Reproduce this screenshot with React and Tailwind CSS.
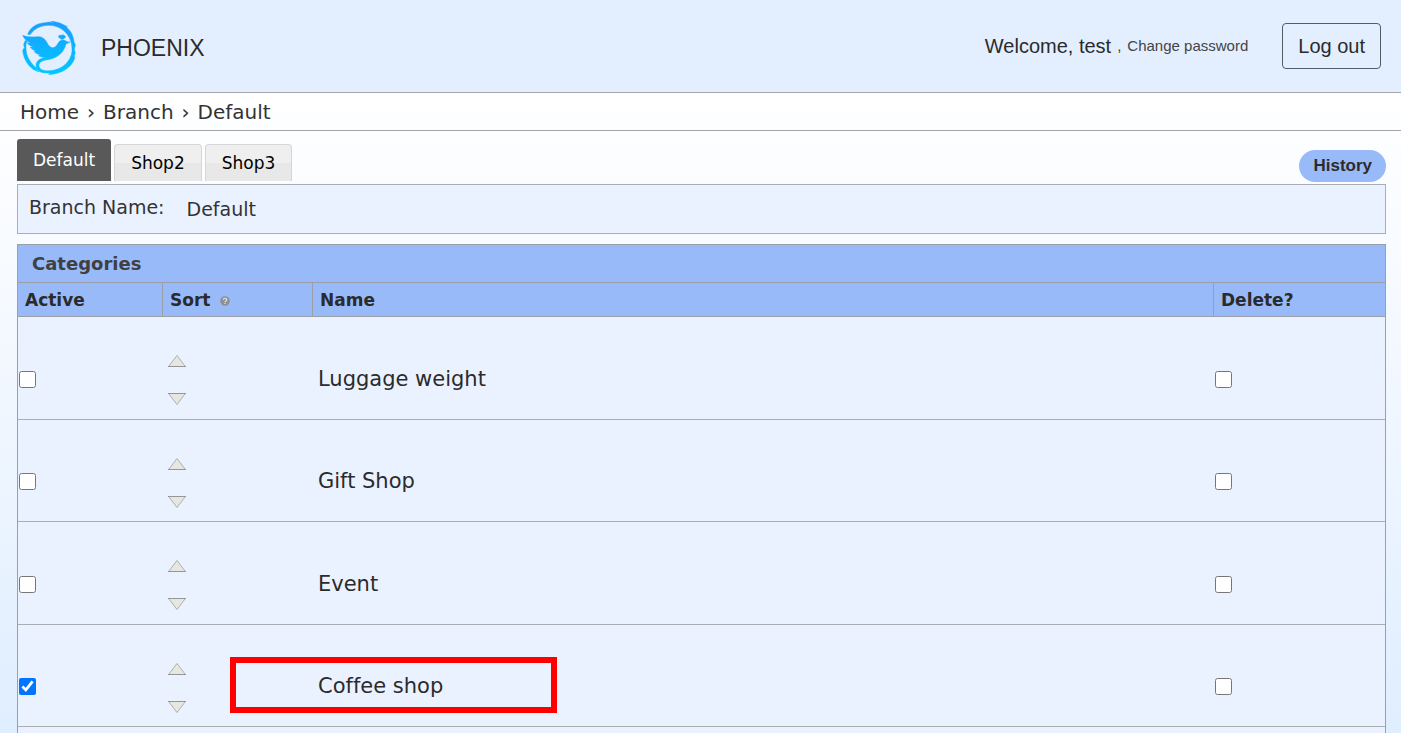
import React from "react";

const categories = [
  { name: "Luggage weight", active: false },
  { name: "Gift Shop", active: false },
  { name: "Event", active: false },
  { name: "Coffee shop", active: true, highlighted: true },
  { name: "", active: false },
];

function PhoenixLogo() {
  return (
    <svg viewBox="37 28 162 162" className="mt-1 size-[54px] shrink-0" role="img" aria-label="Phoenix">
      <defs>
        <linearGradient id="flame" x1="0" y1="28" x2="0" y2="190" gradientUnits="userSpaceOnUse">
          <stop offset="0" stopColor="#1a9dff" />
          <stop offset="1" stopColor="#00c8ff" />
        </linearGradient>
      </defs>
      <g fill="url(#flame)" stroke="url(#flame)" strokeWidth="1.5" strokeLinejoin="round">
        <path d="M54 68 C60 50 78 36 100 34 L120 31 L134 33 L124 28 L142 32 C151 34 158 37 163 40 L173 45 L170 46 C184 58 191 72 193 90 L197 100 L194 112 L197 126 L194 130 L195 140 C189 158 174 172 156 180 L138 186 L117 189 L122 185 L100 183 C84 181 77 168 80 155 C84 144 94 139 108 139 L96 136 L86 132 L92 130 C84 128 76 124 73 119 L82 119 C72 116 64 111 62 106 L72 106 C60 102 54 97 53 93 L64 95 C53 90 43 82 39 71 C53 77 69 76 83 75 C96 74 105 80 111 91 C116 101 122 109 131 108 C140 106 143 98 147 92 C151 86 158 84 165 86 L172 90 L181 91 L169 97 C165 110 160 122 148 130 C137 139 124 143 110 145 C96 147 87 153 88 163 C90 176 106 178 121 177 C156 176 184 150 187 119 C190 76 160 43 121 41 C97 40 76 49 61 69 Z" />
        <path d="M47 86 L42 98 L44 108 L39 116 C40 132 47 149 58 162 L72 174 L88 181 L78 171 L87 174 C68 160 54 143 50 121 C48 108 48 98 52 89 Z" />
        <path d="M147 76 C145 71 151 69 154 72 C157 68 163 69 163 72 C168 71 169 77 165 79 C162 83 158 81 157 84 C155 80 149 82 147 76 Z" />
      </g>
    </svg>
  );
}

function SortArrow({ down }) {
  return (
    <button type="button" aria-label={down ? "Move down" : "Move up"} className="block">
      <svg viewBox="0 0 18 13" className="h-[13px] w-[18px]">
        <path d={down ? "M.5 .5h17l-8.5 11z" : "M.5 12.5h17L9 1.5z"} fill="#e6e7e1" />
        <path d={down ? "M1 1 9 11.5 17 1" : "M1 12 9 1.5 17 12"} fill="none" stroke="#aeb0af" />
        <path d={down ? "M0 .5h18" : "M0 12.5h18"} stroke="#93979c" />
      </svg>
    </button>
  );
}

function HelpIcon() {
  return (
    <svg viewBox="0 0 10 10" className="mt-[3px] size-[10px]" role="img" aria-label="Help">
      <circle cx="5" cy="5" r="4.8" fill="#8d9094" />
      <path d="M3.4 3.8C3.4 1.8 6.7 1.8 6.7 3.8C6.7 5 5 4.9 5 6.2M5 7v1" fill="none" stroke="#e8ebf0" strokeWidth="1.1" />
    </svg>
  );
}

const headCell = "border-b border-[#9a9fa8] px-[7px] text-left text-[17px] leading-6 font-bold text-[#2b2b2b]";

export default function App() {
  return (
    <div className="h-screen overflow-hidden bg-linear-to-b from-white from-12% via-[#f1f7ff] via-55% to-[#dfeeff] font-['DejaVu_Sans',sans-serif] text-[#333] [font-variant-ligatures:none]">
      <header className="flex h-[93px] items-center border-b border-[#a3a8af] bg-[#e3efff] pr-5 pl-[22px] font-['Liberation_Sans',sans-serif]">
        <PhoenixLogo />
        <h1 className="ml-[25px] flex-1 pt-1 text-[23px] leading-8 text-[#2b2b2b]">PHOENIX</h1>
        <div className="flex items-center gap-[6px] text-[15px] leading-8">
          <span className="text-xl text-[#2b2b2b]">Welcome, test</span>
          <span>,</span>
          <a href="#password" className="text-[#444]">Change password</a>
        </div>
        <button type="button" className="ml-[34px] h-[46px] rounded-[4px] border border-[#555b63] px-[15px] text-xl text-[#2b2b2b]">
          Log out
        </button>
      </header>

      <nav aria-label="Breadcrumb" className="flex h-[38px] items-center gap-2 border-b border-[#a3a3a8] px-5 text-xl">
        <a href="#home">Home</a>
        <span>›</span>
        <a href="#branch">Branch</a>
        <span>›</span>
        <span>Default</span>
      </nav>

      <main className="pt-2 pr-[15px] pl-[17px]">
        <div className="flex h-[45px] items-start justify-between">
          <div role="tablist" className="flex h-[42px] items-end gap-[3px] text-[17px]">
            <button type="button" role="tab" aria-selected="true" className="h-[42px] rounded-t-[3px] bg-[#595959] px-4 pt-[2px] text-white">
              Default
            </button>
            {["Shop2", "Shop3"].map((shop) => (
              <button
                key={shop}
                type="button"
                role="tab"
                aria-selected="false"
                className="h-[37px] rounded-t-[4px] border border-b-0 border-[#d6d6d6] bg-linear-to-b from-[#efefef] from-50% to-[#e8e8e8] to-50% px-4 pt-[2px] text-black"
              >
                {shop}
              </button>
            ))}
          </div>
          <button type="button" className="mt-[11px] h-8 rounded-2xl bg-[#99baf9] px-[14px] font-['Liberation_Sans',sans-serif] text-[17px] font-bold text-[#2b2b2b]">
            History
          </button>
        </div>

        <section className="flex h-[50px] items-start gap-[22px] border border-[#a9adb4] bg-[#ebf2ff] px-[11px] pt-2 text-[19px] leading-7">
          <span>Branch Name:</span>
          <span className="pt-[2px]">Default</span>
        </section>

        <table className="mt-[10px] w-full table-fixed border-separate border-spacing-0 border border-[#9a9fa8]">
          <colgroup>
            <col className="w-[144px]" />
            <col className="w-[150px]" />
            <col />
            <col className="w-[172px]" />
          </colgroup>
          <thead>
            <tr className="h-[38px] bg-[#99baf9]">
              <th colSpan={4} className="border-b border-[#9a9fa8] px-[14px] text-left text-lg font-bold text-[#404040]">
                Categories
              </th>
            </tr>
            <tr className="h-[34px] bg-[#99baf9]">
              <th className={headCell}>Active</th>
              <th className={headCell + " border-l"}>
                <span className="flex items-center gap-[10px]">
                  Sort <HelpIcon />
                </span>
              </th>
              <th className={headCell + " border-l"}>Name</th>
              <th className={headCell + " border-l"}>Delete?</th>
            </tr>
          </thead>
          <tbody>
            {categories.map((category, i) => (
              <tr key={i} className="bg-[#ebf2ff] odd:h-[103px] even:h-[102px]">
                <td className="border-b border-[#a9adb4] pt-[22px] pl-px">
                  <input type="checkbox" defaultChecked={category.active} aria-label={"Active " + category.name} className="block size-[17px]" />
                </td>
                <td className="border-b border-[#a9adb4] pt-6 pl-[6px]">
                  <div className="flex flex-col gap-[26px]">
                    <SortArrow />
                    <SortArrow down />
                  </div>
                </td>
                <td className="relative border-b border-[#a9adb4] pt-[23px] pl-[6px] text-[21px] text-[#2b2b2b]">
                  {category.name}
                  {category.highlighted && (
                    <div className="pointer-events-none absolute top-8 left-[-82px] h-14 w-[327px] border-6 border-[#ff0000]" />
                  )}
                </td>
                <td className="border-b border-[#a9adb4] pt-[22px] pl-[2px]">
                  <input type="checkbox" aria-label={"Delete " + category.name} className="block size-[17px]" />
                </td>
              </tr>
            ))}
          </tbody>
        </table>
      </main>
    </div>
  );
}
